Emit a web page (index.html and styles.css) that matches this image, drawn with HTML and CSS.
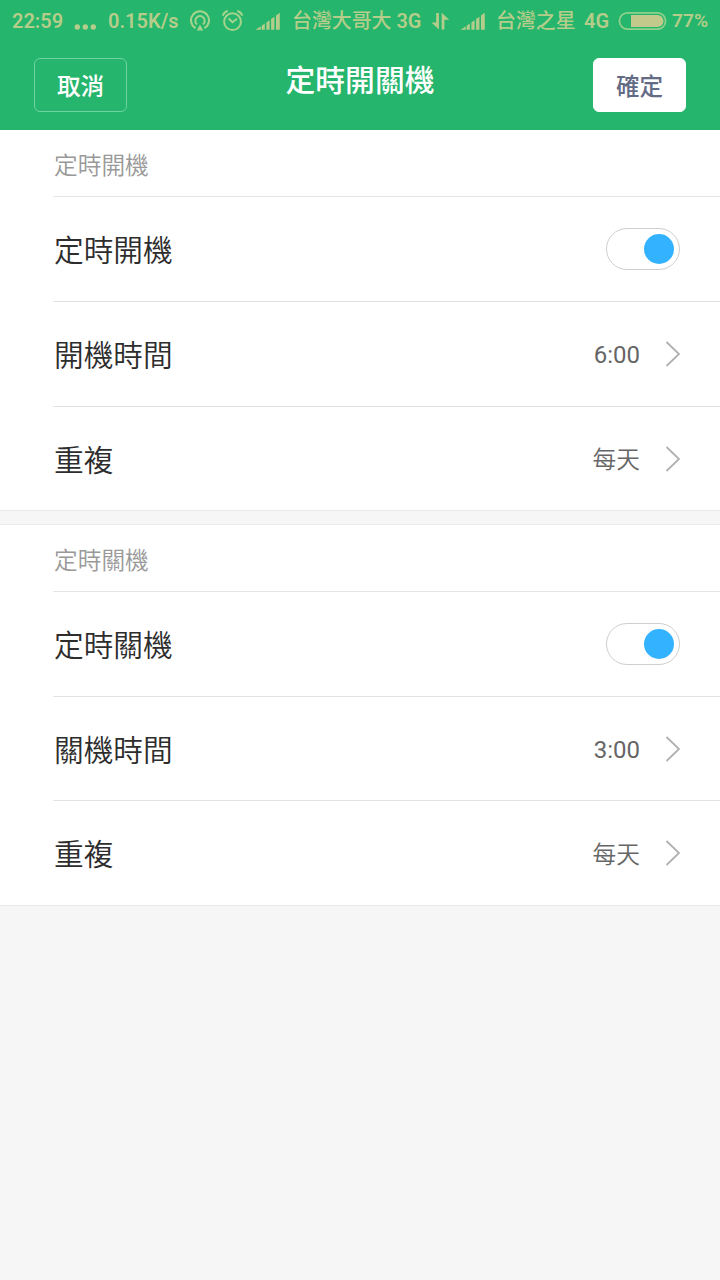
FILE: index.html
```html
<!DOCTYPE html>
<html lang="zh-Hant">
<head>
<meta charset="utf-8">
<meta name="viewport" content="width=device-width">
<title>定時開關機</title>
<link rel="stylesheet" href="styles.css">
</head>
<body>
<header class="top">
  <div class="status">
    <span>22:59</span>
    <svg class="dots" width="24" height="40" viewBox="0 0 24 40"><circle cx="3.3" cy="26" r="2.7"/><circle cx="11.3" cy="26" r="2.7"/><circle cx="19.3" cy="26" r="2.7"/></svg>
    <span>0.15K/s</span>
    <svg class="line" width="22" height="40" viewBox="0 0 22 40"><path d="M5.6 27.2A9 9 0 1 1 14.4 27.2"/><path d="M7 23.4A4.7 4.7 0 1 1 13 23.4"/><path class="solid" d="M10 23.5L13.2 29.5H6.8Z"/></svg>
    <svg class="line" width="24" height="40" viewBox="0 0 24 40"><circle cx="11.5" cy="20.7" r="8.4"/><path d="M1.6 14.6Q3 11.2 6.6 9.8M16.4 9.8Q20 11.2 21.4 14.6M7.6 17.5L11.5 21.3L16 17.8"/></svg>
    <svg class="signal" width="26" height="40" viewBox="0 0 26 40"><path d="M.3 28.8L5.8 25.4V28.8Z"/><path d="M6.7 24.8L9.8 22.6V28.8H6.7ZM11.4 21.4L14.6 19.2V28.8H11.4ZM16.1 18L19.4 15.7V28.8H16.1ZM21 14.4L24.8 11.8V28.8H21Z"/></svg>
    <span class="carrier">台灣大哥大 <b class="net">3G</b></span>
    <svg class="arrows" width="19" height="40" viewBox="0 0 19 40"><path d="M5.2 12H7.9V28.4L.4 21.4H5.2ZM10.7 28.4V11.8L18.2 18.8H13.4V28.4Z"/></svg>
    <svg class="signal" width="26" height="40" viewBox="0 0 26 40"><path d="M.3 28.8L5.8 25.4V28.8Z"/><path d="M6.7 24.8L9.8 22.6V28.8H6.7ZM11.4 21.4L14.6 19.2V28.8H11.4ZM16.1 18L19.4 15.7V28.8H16.1ZM21 14.4L24.8 11.8V28.8H21Z"/></svg>
    <span class="carrier">台灣之星</span>
    <span>4G</span>
    <svg class="battery" width="49" height="40" viewBox="0 0 49 40"><rect class="shell" x="1.4" y="11.8" width="46.2" height="16.4" rx="8.2"/><path d="M13 14H39.5A6 6 0 0 1 39.5 26H13Z"/></svg>
    <span class="percent">77%</span>
  </div>
  <div class="bar">
    <button class="btn cancel">取消</button>
    <h1 class="title">定時開關機</h1>
    <button class="btn confirm">確定</button>
  </div>
</header>
<main>
  <section class="group">
    <h2 class="caption">定時開機</h2>
    <div class="row"><span class="label">定時開機</span><span class="toggle"></span></div>
    <div class="row"><span class="label">開機時間</span><span class="value time">6:00</span><svg class="chevron" width="16" height="28" viewBox="0 0 16 28"><path d="M2.5 2L15 14L2.5 26"/></svg></div>
    <div class="row last"><span class="label">重複</span><span class="value">每天</span><svg class="chevron" width="16" height="28" viewBox="0 0 16 28"><path d="M2.5 2L15 14L2.5 26"/></svg></div>
  </section>
  <section class="group">
    <h2 class="caption">定時關機</h2>
    <div class="row"><span class="label">定時關機</span><span class="toggle"></span></div>
    <div class="row short"><span class="label">關機時間</span><span class="value time">3:00</span><svg class="chevron" width="16" height="28" viewBox="0 0 16 28"><path d="M2.5 2L15 14L2.5 26"/></svg></div>
    <div class="row last"><span class="label">重複</span><span class="value">每天</span><svg class="chevron" width="16" height="28" viewBox="0 0 16 28"><path d="M2.5 2L15 14L2.5 26"/></svg></div>
  </section>
</main>
</body>
</html>
```
FILE: styles.css
```css
* {
  box-sizing: border-box;
}

body {
  margin: 0;
  min-height: 1280px;
  background: #f6f6f6;
  color: #2d2d2d;
  font-family: Roboto, "Noto Sans CJK TC", sans-serif;
}

.top {
  height: 130px;
  background: #25b56c;
}

.status {
  display: grid;
  grid-template-columns: 62px 34px 82px 31px 34px 38px 138px 29px 37px 87px 34px 54px 48px;
  align-items: center;
  height: 40px;
  padding-left: 12px;
  color: #b5cd8a;
  font-size: 20px;
  font-weight: 600;
  line-height: 40px;
  white-space: nowrap;
}

.carrier {
  margin-left: -1px;
  padding-top: 2px;
  font-size: 19.9px;
  font-weight: 500;
}

.net {
  font-weight: 600;
}

.percent {
  font-size: 19.2px;
}

.status svg {
  display: block;
  fill: #b5cd8a;
}

.status .line {
  fill: none;
  stroke: #a6d48c;
  stroke-width: 2;
}

.status .line .solid {
  fill: #a6d48c;
  stroke: none;
}

.status .battery {
  fill: #c3c98b;
}

.status .shell {
  fill: none;
  stroke: #8fd08a;
  stroke-width: 1.8;
}

.bar {
  display: flex;
  justify-content: space-between;
  align-items: flex-start;
  padding: 18px 34px 0;
}

.btn {
  width: 93px;
  height: 54px;
  padding: 0 0 1px;
  border: 1px solid #6fd29f;
  border-radius: 6px;
  font: 500 23.6px "Noto Sans CJK TC", sans-serif;
}

.cancel {
  background: transparent;
  color: #fff;
}

.confirm {
  border-color: #fff;
  background: #fff;
  color: #646b85;
}

.title {
  margin: 0;
  padding-top: 1px;
  color: #fff;
  font-size: 29.8px;
  font-weight: 500;
  line-height: 44px;
}

.group {
  background: #fff;
  border-bottom: 1px solid #e9e9e9;
}

.group + .group {
  margin-top: 13px;
  border-top: 1px solid #ebebeb;
}

.caption {
  height: 67px;
  margin: 0 0 0 53px;
  padding-left: 1px;
  border-bottom: 1px solid #e5e5e5;
  color: #999;
  font-size: 23.7px;
  font-weight: 350;
  line-height: 72px;
}

.row {
  display: flex;
  align-items: center;
  height: 105px;
  margin-left: 53px;
  padding: 0 40px 0 1px;
  border-bottom: 1px solid #e2e2e2;
}

.row.short {
  height: 104px;
}

.row.last {
  height: 104px;
  border-bottom: 0;
}

.group:first-child .last {
  height: 103px;
}

.label {
  flex: 1;
  padding-top: 4px;
  font-size: 29.7px;
  font-weight: 350;
  line-height: 44px;
}

.value {
  margin-right: 24px;
  padding-top: 3px;
  color: #666;
  font-size: 23.7px;
  font-weight: 350;
  line-height: 36px;
}

.time {
  padding-top: 2px;
  font-size: 24px;
  font-weight: 400;
}

.toggle {
  display: flex;
  justify-content: flex-end;
  align-items: center;
  width: 74px;
  height: 42px;
  padding-right: 5px;
  border: 1px solid #cfcfcf;
  border-radius: 21px;
}

.toggle::after {
  content: "";
  width: 30px;
  height: 30px;
  border-radius: 50%;
  background: #33b2ff;
}

.chevron {
  fill: none;
  stroke: #b0b0b0;
  stroke-width: 1.8;
}
```
